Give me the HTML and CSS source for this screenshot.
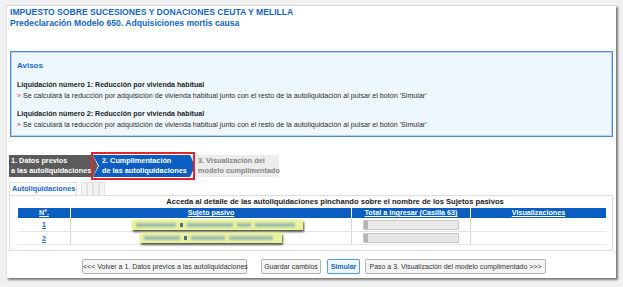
FILE: index.html
```html
<!DOCTYPE html>
<html lang="es">
<head>
<meta charset="utf-8">
<link rel="stylesheet" href="styles.css">
</head>
<body>
<div class="window">
  <div class="head">
    <div class="t1">IMPUESTO SOBRE SUCESIONES Y DONACIONES CEUTA Y MELILLA</div>
    <div class="t2">Predeclaración Modelo 650. Adquisiciones mortis causa</div>
  </div>
  <div class="avisos">
    <div class="av-title">Avisos</div>
    <div class="av-item">
      <div class="av-h">Liquidación número 1: Reducción por vivienda habitual</div>
      <div class="av-b"><span class="dot">»</span> Se calculará la reducción por adquisición de vivienda habitual junto con el resto de la autoliquidación al pulsar el botón 'Simular'</div>
    </div>
    <div class="av-item second">
      <div class="av-h">Liquidación número 2: Reducción por vivienda habitual</div>
      <div class="av-b"><span class="dot">»</span> Se calculará la reducción por adquisición de vivienda habitual junto con el resto de la autoliquidación al pulsar el botón 'Simular'</div>
    </div>
  </div>
  <div class="steps">
    <div class="step s1">1. Datos previos<br>a las autoliquidaciones</div>
    <div class="step s2"><span class="notch-w"></span><span class="notch-d"></span>2. Cumplimentación<br>de las autoliquidaciones<span class="arr-w"></span><span class="arr-out"></span><span class="hl"></span></div>
    <div class="step s3">3. Visualización del<br>modelo cumplimentado</div>
  </div>
  <div class="tabs">
    <div class="tab active">Autoliquidaciones</div>
    <div class="tab empty first"></div>
    <div class="tab empty"></div>
    <div class="tab empty"></div>
    <div class="tab empty"></div>
  </div>
  <div class="panel">
    <div class="caption">Acceda al detalle de las autoliquidaciones pinchando sobre el nombre de los Sujetos pasivos</div>
    <table class="grid">
      <thead>
        <tr>
          <th class="c1"><u>Nº.</u></th>
          <th class="c2"><u>Sujeto pasivo</u></th>
          <th class="c3"><u>Total a ingresar (Casilla 63)</u></th>
          <th class="c4"><u>Visualizaciones</u></th>
        </tr>
      </thead>
      <tbody>
        <tr class="r1">
          <td class="num"><u>1</u></td>
          <td class="name"><span class="blur b1"><i class="bl w1"></i><i class="dotc"></i><i class="bl w2"></i><i class="bl w3"></i><i class="bl w4"></i></span></td>
          <td><span class="field"></span></td>
          <td></td>
        </tr>
        <tr class="r2">
          <td class="num"><u>2</u></td>
          <td class="name"><span class="blur b2"><i class="bl w5"></i><i class="dotc"></i><i class="bl w6"></i><i class="bl w7"></i></span></td>
          <td><span class="field"></span></td>
          <td></td>
        </tr>
      </tbody>
    </table>
  </div>
  <div class="buttons">
    <button class="btn back">&lt;&lt;&lt; Volver a 1. Datos previos a las autoliquidaciones</button>
    <button class="btn save">Guardar cambios</button>
    <button class="btn primary">Simular</button>
    <button class="btn next">Paso a 3. Visualización del modelo cumplimentado &gt;&gt;&gt;</button>
  </div>
</div>
</body>
</html>
```

FILE: styles.css
```css
html, body { margin: 0; padding: 0; }
body {
  background: #f1f1f1;
  font-family: "Liberation Sans", Arial, sans-serif;
  width: 623px;
  height: 287px;
  overflow: hidden;
}
.window {
  margin: 5px 0 0 6px;
  width: 610px;
  height: 273px;
  background: #fff;
  border-top: 1px solid #dcdcdc;
  border-left: 1px solid #e6e6e6;
  box-shadow: 2px 2px 2px #7c7c7c;
  box-sizing: border-box;
  padding: 0 3px 0 1px;
}
.head { padding: 1px 0 0 2px; height: 45px; box-sizing: border-box; }
.t1, .t2 { color: #1366c8; font-weight: bold; font-size: 8.6px; line-height: 11px; white-space: nowrap; }
.avisos {
  margin: 0 0 0 2px;
  height: 86px;
  box-sizing: border-box;
  border: 1px solid #4a8ad3;
  box-shadow: inset 0 0 0 1px #b8d4f2;
  background: #eef6fe;
  padding: 8px 0 0 6px;
  white-space: nowrap;
}
.av-title { color: #1a6ccc; font-weight: bold; font-size: 8px; line-height: 11px; margin-bottom: 9px; }
.av-item.second { margin-top: 7px; }
.av-h { color: #1e1e1e; font-weight: bold; font-size: 7.1px; line-height: 11px; }
.av-b { color: #2e2e2e; font-size: 7.15px; line-height: 11px; }
.dot { color: #d9534f; }
.steps { display: flex; margin: 18px 0 0 1px; height: 22px; white-space: nowrap; }
.step { font-size: 7.3px; font-weight: bold; line-height: 10px; padding: 1px 0 0 3px; box-sizing: border-box; position: relative; }
.s1 { background: #5b5b5b; color: #fff; width: 84px; padding-left: 2px; }
.s2 { background: #0a5ec2; color: #fff; width: 97px; padding-left: 9px; z-index: 1; }
.notch-w {
  position: absolute; left: 0; top: 0;
  border-style: solid; border-width: 11px 0 11px 6px;
  border-color: transparent transparent transparent #fff;
}
.notch-d {
  position: absolute; left: 0; top: 0;
  border-style: solid; border-width: 11px 0 11px 5px;
  border-color: transparent transparent transparent #5b5b5b;
}
.arr-w {
  position: absolute; right: -6px; top: 0;
  border-style: solid; border-width: 11px 0 11px 6px;
  border-color: transparent transparent transparent #fff;
}
.arr-out {
  position: absolute; right: -5px; top: 0;
  border-style: solid; border-width: 11px 0 11px 5px;
  border-color: transparent transparent transparent #0a5ec2;
}
.hl {
  position: absolute; left: -2px; right: -5px; top: -3px; bottom: -3px;
  border: 2px solid #e3262d;
}
.s3 { background: #ececec; color: #868686; width: 89px; padding-left: 8px; }
.tabs { display: flex; margin-top: 5px; margin-left: 1px; height: 13px; }
.tab { height: 13px; box-sizing: border-box; border: 1px solid #e0e0e0; border-bottom: none; }
.tab.active { color: #1468c8; font-weight: bold; font-size: 7.3px; line-height: 12px; padding: 0 2px; width: 68px; white-space: nowrap; }
.tab.empty { width: 6px; background: #f4f4f4; }
.tab.empty.first { margin-left: 4px; }
.panel {
  border: 1px solid #dedede;
  margin-left: 1px;
  width: 604px;
  height: 56px;
  box-sizing: border-box;
  padding: 0 0 0 8px;
}
.caption { text-align: center; font-size: 7.6px; font-weight: bold; color: #222; line-height: 12px; padding-left: 40px; white-space: nowrap; }
.grid { border-collapse: collapse; width: 588px; font-size: 7.2px; }
.grid th { background: #0a5ec2; color: #fff; font-weight: bold; height: 10px; padding: 0; line-height: 10px; border-left: 1px solid #fff; white-space: nowrap; }
.grid th:first-child { border-left: none; }
.grid td { padding: 0; border-left: 1px solid #d8d8d8; border-bottom: 1px solid #e4e4e4; text-align: center; }
.r1 td { height: 13px; }
.r2 td { height: 12px; }
.grid td:first-child { border-left: none; }
.c1 { width: 52px; }
.c2 { width: 280px; }
.c3 { width: 118px; }
.num { color: #1468c8; font-weight: bold; }
.blur {
  display: inline-flex; align-items: center; gap: 4px;
  background: #eaf39a; height: 10px; padding: 0 4px;
  box-shadow: 1px 2px 2px #555, 0 0 3px #f0f4a0;
  vertical-align: middle; box-sizing: border-box;
}
.b1 { width: 171px; margin-left: 13px; }
.b2 { width: 142px; }
.bl { display: inline-block; height: 4px; background: #8fb3b8; filter: blur(1px); opacity: 0.85; }
.dotc { display: inline-block; width: 3px; height: 4px; background: #4a6e96; }
.w1 { width: 40px; } .w2 { width: 46px; } .w3 { width: 14px; } .w4 { width: 40px; }
.w5 { width: 36px; } .w6 { width: 34px; } .w7 { width: 44px; }
.field {
  display: inline-block; width: 94px; height: 8px; vertical-align: middle;
  background: linear-gradient(90deg, #b4b4b4 0 4px, #e8e8e8 4px);
  border: 1px solid #c8c8c8; border-radius: 1px;
}
.buttons { display: flex; margin-top: 8px; padding-left: 74px; }
.btn {
  font-family: "Liberation Sans", Arial, sans-serif;
  font-size: 7px; color: #333; background: #f5f5f5;
  border: 1px solid #b5b5b5; border-radius: 2px;
  height: 15px; padding: 0; line-height: 12px; white-space: nowrap;
  box-sizing: border-box;
}
.back { width: 165px; }
.save { width: 60px; margin-left: 14px; }
.primary { width: 33px; margin-left: 6px; color: #1468c8; font-weight: bold; border-color: #5b9be0; box-shadow: 0 0 1px #8bbcf0; background: #eef6fe; }
.next { width: 181px; margin-left: 5px; }
```
